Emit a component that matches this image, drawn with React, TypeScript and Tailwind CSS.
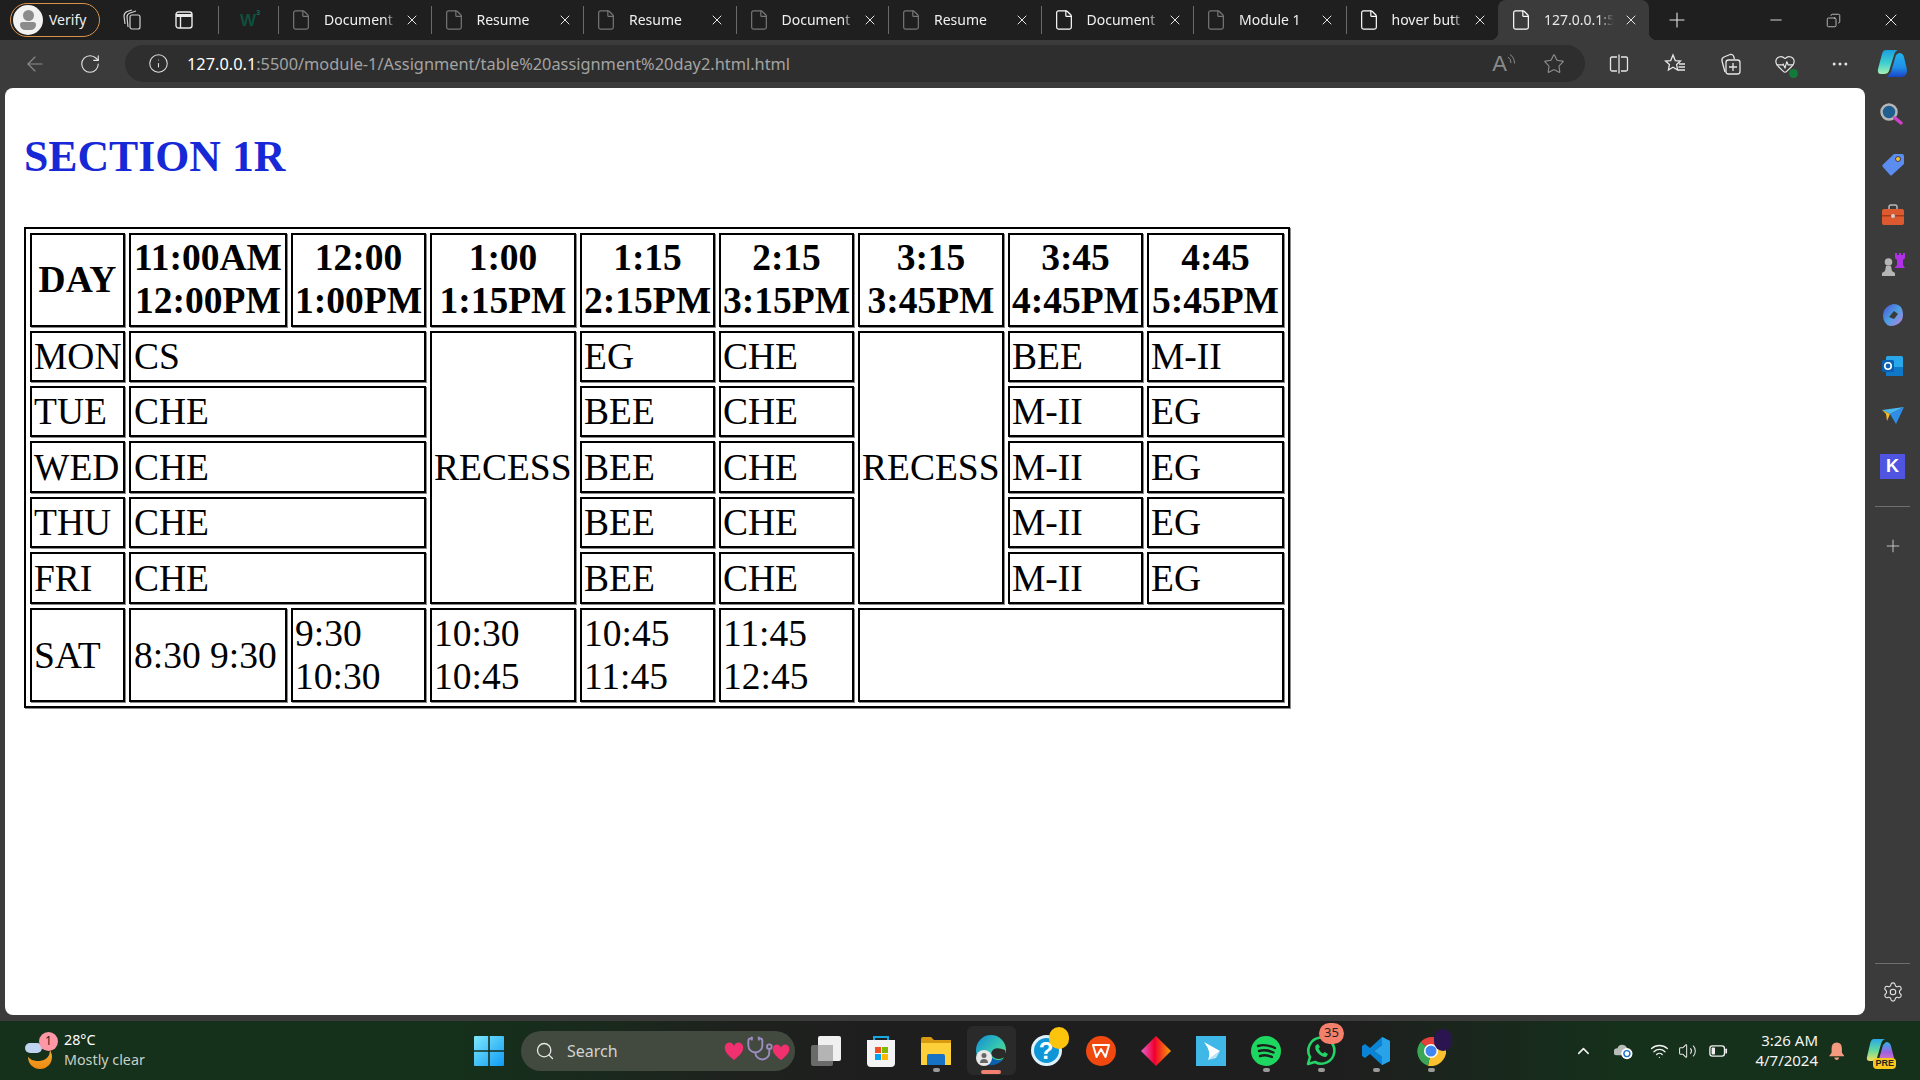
import React from 'react';
import {
	ArrowLeft,
	Copy,
	Ellipsis,
	File,
	HeartPulse,
	Info,
	Minus,
	Plus,
	RotateCw,
	Search,
	Settings,
	Star,
	Stethoscope,
	Volume2,
	Wifi,
	X,
	ChevronUp,
} from 'lucide-react';

const uiFont = "font-['Noto_Sans',sans-serif]";

const tabs = [
	{ title: 'Document', bright: false },
	{ title: 'Resume', bright: false },
	{ title: 'Resume', bright: false },
	{ title: 'Document', bright: false },
	{ title: 'Resume', bright: false },
	{ title: 'Document', bright: true },
	{ title: 'Module 1', bright: false },
	{ title: 'hover butt', bright: true },
];

const cell = 'border-2 border-black shadow-[1px_1px_0_#8a8a8a] px-[2px] py-[2px] align-middle';
const wide = 'border-2 border-black shadow-[1px_1px_0_#8a8a8a] pl-[3px] pr-[1px] py-[2px] align-middle';
const head = 'border-2 border-black shadow-[1px_1px_0_#8a8a8a] px-[2px] pt-[1px] pb-[3px] align-middle text-center font-bold';

const dayRows = [
	{ day: 'TUE', first: 'CHE', h: 'h-[51px]' },
	{ day: 'WED', first: 'CHE', h: 'h-[52px]' },
	{ day: 'THU', first: 'CHE', h: 'h-[51px]' },
	{ day: 'FRI', first: 'CHE', h: 'h-[52px]' },
];

const Tab = ({ title, bright }: { title: string; bright: boolean }) => (
	<div className="flex h-7 w-[152.5px] shrink-0 items-center border-l border-[#6a6a6a]">
		<File size={22} strokeWidth={1.3} className={`ml-[11px] ${bright ? 'text-white' : 'text-[#777777]'}`} />
		<div className="ml-[12px] w-[72px] overflow-hidden pb-[2px] whitespace-nowrap text-[14px] text-[#f0f0f0] [mask-image:linear-gradient(90deg,#000_85%,transparent)]">
			{title}
		</div>
		<X size={16} strokeWidth={1.5} className="ml-[8px] text-[#e6e6e6]" />
	</div>
);

// ブラウザのアクティブタブ
const ActiveTab = () => (
	<div className="relative flex h-10 w-[151px] shrink-0 items-center rounded-t-lg bg-[#3b3b3b]">
		<span className="absolute bottom-0 -left-2 h-2 w-2 bg-[radial-gradient(circle_at_0_0,#1f1f1f_8px,#3b3b3b_8.5px)]" />
		<span className="absolute -right-2 bottom-0 h-2 w-2 bg-[radial-gradient(circle_at_100%_0,#1f1f1f_8px,#3b3b3b_8.5px)]" />
		<File size={22} strokeWidth={1.3} className="ml-[12px] text-white" />
		<div className="ml-[12px] w-[70px] overflow-hidden pb-[2px] whitespace-nowrap text-[14px] text-[#e8e8e8] [mask-image:linear-gradient(90deg,#000_78%,transparent)]">
			127.0.0.1:5
		</div>
		<X size={16} strokeWidth={1.5} className="ml-[9px] text-[#e6e6e6]" />
	</div>
);

const TabStrip = () => (
	<div className={`flex h-10 shrink-0 items-center bg-[#1f1f1f] ${uiFont}`}>
		<div className="flex w-[278px] shrink-0 items-center">
			<div className="ml-[10px] flex h-[34px] w-[90px] items-center rounded-full border border-[#d9914e]">
				<div className="ml-[2px] flex h-[30px] w-[30px] flex-col items-center justify-center overflow-hidden rounded-full bg-[#f2f2f2]">
					<span className="h-[11px] w-[11px] rounded-full bg-[#8c8c8c]" />
					<span className="mt-[1px] h-[8px] w-[16px] rounded-t-sm rounded-b-lg bg-[#8c8c8c]" />
				</div>
				<span className="ml-[6px] pb-[2px] text-[14px] text-[#f0f0f0]">Verify</span>
			</div>
			<svg width="20" height="22" viewBox="0 0 20 22" fill="none" stroke="#d0d0d0" strokeWidth="1.2" className="ml-[22px]">
				<rect x="8" y="6" width="10" height="14" rx="2" />
				<path d="M6 18 L5 8 Q5 5 8 4 L14 2" />
				<path d="M3 15 L2 7 Q2 4 5 2.5 L10 1" />
			</svg>
			<svg width="18" height="18" viewBox="0 0 18 18" fill="none" stroke="#e8e8e8" strokeWidth="1.4" className="ml-[33px]">
				<rect x="1" y="1" width="16" height="16" rx="2.5" />
				<path d="M1 4.5 H17" strokeWidth="3" />
				<path d="M5.5 5 V17" />
			</svg>
			<span className="ml-[25px] h-7 w-px bg-[#6a6a6a]" />
			<span className="relative ml-[21px] font-['Liberation_Sans',sans-serif] text-[17px] leading-none font-bold text-[#0f4f3c]">
				W<span className="absolute -top-[3px] -right-[4px] text-[7px] text-[#0f6f50]">3</span>
			</span>
		</div>
		{tabs.map((tab, i) => (
			<Tab key={i} title={tab.title} bright={tab.bright} />
		))}
		<ActiveTab />
		<Plus size={24} strokeWidth={1.1} className="ml-[16px] text-[#e6e6e6]" />
		<Minus size={18} strokeWidth={1.2} className="ml-[78px] text-[#e6e6e6]" />
		<Copy size={15} strokeWidth={1.2} className="ml-[41px] -scale-x-100 text-[#e6e6e6]" />
		<X size={20} strokeWidth={1.2} className="ml-[40px] text-[#e6e6e6]" />
	</div>
);

const Toolbar = () => (
	<div className={`flex h-12 shrink-0 items-start bg-[#3b3b3b] pt-[5px] ${uiFont}`}>
		<div className="flex h-[37px] w-[125px] shrink-0 items-center">
			<ArrowLeft size={24} strokeWidth={1.1} className="ml-[23px] text-[#8d8d8d]" />
			<RotateCw size={22} strokeWidth={1.2} className="ml-[32px] text-[#e6e6e6]" />
		</div>
		<div className="flex h-[37px] w-[1460px] shrink-0 items-center rounded-full bg-[#2e2e2e]">
			<Info size={21} strokeWidth={1.2} className="ml-[23px] text-[#e0e0e0]" />
			<span className="ml-[18px] pt-[1px] text-[16.35px] whitespace-nowrap text-[#a3a3a3]">
				<span className="text-white">127.0.0.1</span>:5500/module-1/Assignment/table%20assignment%20day2.html.html
			</span>
			<span className="ml-auto flex items-center">
				<span className="font-['Liberation_Sans',sans-serif] text-[22px] leading-none text-[#8a8a8a]">A</span>
				<svg width="9" height="12" viewBox="0 0 9 12" fill="none" stroke="#8a8a8a" strokeWidth="1" className="-mt-[10px]">
					<path d="M1 4 Q4 6 4 10 M3 1.5 Q7.5 4.5 7.5 10.5" />
				</svg>
				<Star size={22} strokeWidth={1.2} className="mr-[20px] ml-[27px] text-[#8f8f8f]" />
			</span>
		</div>
		<div className="flex h-[37px] items-center">
			<svg width="20" height="20" viewBox="0 0 20 20" fill="none" stroke="#e6e6e6" strokeWidth="1.3" className="ml-[24px]">
				<path d="M8 3 H3 Q1.5 3 1.5 4.5 V15.5 Q1.5 17 3 17 H8" />
				<path d="M12 3 H17 Q18.5 3 18.5 4.5 V15.5 Q18.5 17 17 17 H12" />
				<path d="M10 0.5 V19.5" />
			</svg>
			<svg width="22" height="22" viewBox="0 0 22 22" fill="none" stroke="#e6e6e6" strokeWidth="1.3" className="ml-[35px]">
				<path d="M9 2 L11.3 7.6 L16.5 8 L12.6 11.6 L13.6 17 L9 14.2 L4.4 17 L5.4 11.6 L1.5 8 L6.7 7.6 Z" />
				<path d="M15 11 H21 M14.5 14 H21 M14 17 H21" />
			</svg>
			<svg width="22" height="24" viewBox="0 0 22 24" fill="none" stroke="#e6e6e6" strokeWidth="1.3" className="ml-[33px]">
				<path d="M6 20 L3 9 Q2.5 6 5 5 L11 2.5 Q13.5 2 14.5 4 L15.5 7" />
				<rect x="7" y="8" width="14" height="14" rx="2.5" />
				<path d="M14 11 V19 M10 15 H18" />
			</svg>
			<span className="relative ml-[33px] flex">
				<HeartPulse size={22} strokeWidth={1.3} className="text-[#e6e6e6]" />
				<span className="absolute -right-[2px] -bottom-[3px] h-[9px] w-[9px] rounded-full bg-[#127a3a]" />
			</span>
			<Ellipsis size={20} strokeWidth={1.6} className="ml-[34px] text-[#e6e6e6]" />
			<svg width="30" height="32" viewBox="0 0 30 32" className="ml-[27px]">
				<defs>
					<linearGradient id="cop1" x1="0" y1="0" x2="0" y2="1">
						<stop offset="0" stopColor="#1a9fe0" />
						<stop offset="0.55" stopColor="#3fd0d0" />
						<stop offset="1" stopColor="#a8eeb0" />
					</linearGradient>
					<linearGradient id="cop2" x1="0" y1="0" x2="0" y2="1">
						<stop offset="0" stopColor="#22b4ec" />
						<stop offset="0.6" stopColor="#1f8fe8" />
						<stop offset="1" stopColor="#1a45c8" />
					</linearGradient>
				</defs>
				<path d="M22 5 Q26 5 27 9 L30 22 Q30 29 24 29 H10 L14 24 L19 7 Z" fill="url(#cop2)" />
				<path d="M9 2 H21 Q18 3 17 7 L12 23 Q11 26 7 26 H4 Q0 26 1 21 L5 6 Q6 2 9 2Z" fill="url(#cop1)" />
			</svg>
		</div>
	</div>
);

const Timetable = () => (
	<table className="w-[1266px] table-fixed border-separate border-spacing-[4px] border-2 border-black font-['Liberation_Serif',serif] text-[37.5px] leading-[43px] text-black shadow-[1px_1px_0_#8a8a8a]">
		<colgroup>
			<col className="w-[95px]" />
			<col className="w-[158px]" />
			<col className="w-[135px]" />
			<col className="w-[146px]" />
			<col className="w-[135px]" />
			<col className="w-[135px]" />
			<col className="w-[146px]" />
			<col className="w-[135px]" />
			<col className="w-[137px]" />
		</colgroup>
		<tbody>
			<tr className="h-[94px]">
				<th className={head}>DAY</th>
				<th className={head}>11:00AM<br />12:00PM</th>
				<th className={head}>12:00<br />1:00PM</th>
				<th className={head}>1:00<br />1:15PM</th>
				<th className={head}>1:15<br />2:15PM</th>
				<th className={head}>2:15<br />3:15PM</th>
				<th className={head}>3:15<br />3:45PM</th>
				<th className={head}>3:45<br />4:45PM</th>
				<th className={head}>4:45<br />5:45PM</th>
			</tr>
			<tr className="h-[51px]">
				<td className={cell}>MON</td>
				<td className={wide} colSpan={2}>CS</td>
				<td className={`${cell} whitespace-nowrap`} rowSpan={5}>RECESS</td>
				<td className={cell}>EG</td>
				<td className={cell}>CHE</td>
				<td className={`${cell} whitespace-nowrap`} rowSpan={5}>RECESS</td>
				<td className={cell}>BEE</td>
				<td className={cell}>M-II</td>
			</tr>
			{dayRows.map((row) => (
				<tr key={row.day} className={row.h}>
					<td className={cell}>{row.day}</td>
					<td className={wide} colSpan={2}>{row.first}</td>
					<td className={cell}>BEE</td>
					<td className={cell}>CHE</td>
					<td className={cell}>M-II</td>
					<td className={cell}>EG</td>
				</tr>
			))}
			<tr className="h-[93px]">
				<td className={cell}>SAT</td>
				<td className={`${wide} whitespace-nowrap`}>8:30 9:30</td>
				<td className={cell}>9:30<br />10:30</td>
				<td className={cell}>10:30<br />10:45</td>
				<td className={cell}>10:45<br />11:45</td>
				<td className={cell}>11:45<br />12:45</td>
				<td className={cell} colSpan={3}></td>
			</tr>
		</tbody>
	</table>
);

const SideIcon = ({ children }: { children: React.ReactNode }) => (
	<div className="flex h-[50.3px] items-center justify-center">{children}</div>
);

const Sidebar = () => (
	<div className="flex w-[55px] shrink-0 flex-col items-center pt-px">
		<SideIcon>
			<svg width="24" height="24" viewBox="0 0 24 24" className="-ml-[3px]">
				<circle cx="10" cy="10" r="7.5" fill="#1f5f8f" stroke="#b5b5b5" strokeWidth="2.5" />
				<path d="M16 16 L22 21" stroke="#d040c8" strokeWidth="3.5" strokeLinecap="round" />
			</svg>
		</SideIcon>
		<SideIcon>
			<svg width="24" height="24" viewBox="0 0 24 24">
				<path d="M13 2 H21 Q23 2 23 4 V12 L11 23 Q10 24 9 23 L1.5 14.5 Q1 13.5 2 12.5 Z" fill="#5b8df0" />
				<circle cx="17" cy="7" r="2.5" fill="#f4c430" stroke="#3a3a60" />
			</svg>
		</SideIcon>
		<SideIcon>
			<svg width="24" height="22" viewBox="0 0 24 22">
				<path d="M8 6 V3 Q8 1 10 1 H14 Q16 1 16 3 V6" fill="none" stroke="#b9b9b9" strokeWidth="1.5" />
				<rect x="1" y="5" width="22" height="16" rx="2" fill="#dd5a30" />
				<rect x="1" y="11" width="22" height="1.5" fill="#a53a1a" />
				<circle cx="12" cy="12" r="2" fill="#d0d0d0" />
			</svg>
		</SideIcon>
		<SideIcon>
			<svg width="24" height="24" viewBox="0 0 24 24">
				<path d="M14 0 H16 V2 H18 V0 H20 V2 H22 V0 H24 V5 L22 7 V12 L24 15 H13.5 L16 12 V7 L14 5 Z" fill="#b030e8" />
				<circle cx="7.5" cy="9" r="3.8" fill="#b5b5b5" />
				<path d="M5 13 H10 L11 18 L14 20 V23 H1 V20 L4 18 Z" fill="#b5b5b5" />
			</svg>
		</SideIcon>
		<SideIcon>
			<svg width="22" height="24" viewBox="0 0 22 24">
				<defs>
					<linearGradient id="m365" x1="0" y1="0" x2="1" y2="1">
						<stop offset="0" stopColor="#4f4fd8" />
						<stop offset="0.5" stopColor="#4aa0e0" />
						<stop offset="1" stopColor="#c080e0" />
					</linearGradient>
				</defs>
				<path d="M11 1 Q18 1 20 6 Q22 12 20 17 Q16 23 8 23 Q1 21 1 12 Q1 4 11 1Z" fill="url(#m365)" />
				<path d="M12 8 L16 11 L12 16 L7 14 Z" fill="#3b3b3b" />
			</svg>
		</SideIcon>
		<SideIcon>
			<svg width="22" height="22" viewBox="0 0 22 22">
				<rect x="4" y="1" width="17" height="20" rx="1.5" fill="#28a8ea" />
				<path d="M4 12 H21 V21 H4 Z" fill="#0f78c8" />
				<rect x="0" y="5" width="12" height="12" rx="1.5" fill="#0a5fb0" />
				<circle cx="6" cy="11" r="3.2" fill="none" stroke="#ffffff" strokeWidth="1.6" />
			</svg>
		</SideIcon>
		<SideIcon>
			<svg width="24" height="20" viewBox="0 0 24 20">
				<path d="M1 4 L23 1 L9 8 Z" fill="#4ab8f0" />
				<path d="M23 1 L15 18 L9 8 Z" fill="#2f8fe8" />
				<path d="M1 4 L9 8 L6 15 L5 8 Z" fill="#f4b820" />
			</svg>
		</SideIcon>
		<SideIcon>
			<div className="flex h-[25px] w-[25px] items-center justify-center bg-[#4f55e0] font-['Liberation_Sans',sans-serif] text-[18px] font-bold text-white">
				K
			</div>
		</SideIcon>
		<div className="mt-[15px] h-px w-[35px] bg-[#6e6e6e]" />
		<Plus size={20} strokeWidth={1.1} className="mt-[29px] text-[#cfcfcf]" />
		<div className="mt-auto h-px w-[35px] bg-[#6e6e6e]" />
		<Settings size={22} strokeWidth={1.2} className="mt-[17px] mb-[18px] text-[#e6e6e6]" />
	</div>
);

const TaskCell = ({ children, dot, active }: { children: React.ReactNode; dot?: boolean; active?: boolean }) => (
	<div className="relative flex h-[49px] w-[55px] shrink-0 items-center justify-center">
		{active && <span className="absolute top-0 left-[3px] h-[49px] w-[49px] rounded-md bg-[#2a2a2a]" />}
		<div className="relative flex">{children}</div>
		{dot && <span className="absolute bottom-[3px] left-[24px] h-[4px] w-[7px] rounded-full bg-[#9a9a9a]" />}
		{active && <span className="absolute bottom-[1px] left-[17px] h-[4px] w-[20px] rounded-full bg-[#f08070]" />}
	</div>
);

const Taskbar = () => (
	<div className={`flex h-[59px] shrink-0 items-center bg-[linear-gradient(90deg,#15301b_0%,#15301b_24%,#1e221e_38%,#1e1e1e_45%,#1e1e1e_70%,#15301b_84%,#15301b_100%)] ${uiFont}`}>
		{/* 天気 */}
		<div className="flex w-[461.5px] shrink-0 items-center">
			<div className="relative ml-[25px] h-[40px] w-[30px]">
				<span className="absolute top-[14px] left-[3px] h-[24px] w-[24px] rounded-full bg-[linear-gradient(180deg,#f0b040,#f08a10)]" />
				<span className="absolute top-[9px] left-[1px] h-[21px] w-[24px] rounded-full bg-[#15301b]" />
				<span className="absolute top-[12px] left-0 h-[10px] w-[17px] rounded-full bg-[#c0d4f0]" />
				<span className="absolute top-[1px] left-[14px] flex h-[19px] w-[19px] items-center justify-center rounded-full bg-[#ff98a6] text-[12px] text-[#222222]">1</span>
			</div>
			<div className="ml-[9px] flex -translate-y-px flex-col text-[14.3px] leading-[20px]">
				<span className="text-white">28°C</span>
				<span className="text-[#c8d0c8]">Mostly clear</span>
			</div>
		</div>
		<TaskCell>
			<svg width="30" height="30" viewBox="0 0 30 30">
				<defs>
					<linearGradient id="win" x1="0" y1="0" x2="1" y2="1">
						<stop offset="0" stopColor="#7ee8fb" />
						<stop offset="1" stopColor="#0f9bf5" />
					</linearGradient>
				</defs>
				<path d="M0 1 Q0 0 1 0 H14.2 V14.2 H0 Z M15.8 0 H29 Q30 0 30 1 V14.2 H15.8 Z M0 15.8 H14.2 V30 H1 Q0 30 0 29 Z M15.8 15.8 H30 V29 Q30 30 29 30 H15.8 Z" fill="url(#win)" />
			</svg>
		</TaskCell>
		<div className="ml-[4.5px] flex h-[40px] w-[274px] shrink-0 items-center rounded-full bg-[#42493f]">
			<Search size={20} strokeWidth={1.6} className="ml-[14px] text-[#e8e8e8]" />
			<span className="ml-[12px] text-[16px] text-[#d0d4d0]">Search</span>
			<span className="mr-[5px] ml-auto flex items-center">
				<svg width="20" height="20" viewBox="0 0 20 20" className="mr-[2px]"><path d="M10 19 C2 13 0 9 1 5 C2 1 8 0 10 5 C12 0 18 1 19 5 C20 9 18 13 10 19Z" fill="#f0306f" /></svg>
				<Stethoscope size={28} strokeWidth={1.6} className="-mt-[3px] text-[#9c8cc0]" />
				<svg width="18" height="18" viewBox="0 0 20 20" className="mt-[2px] -ml-[2px]"><path d="M10 19 C2 13 0 9 1 5 C2 1 8 0 10 5 C12 0 18 1 19 5 C20 9 18 13 10 19Z" fill="#f0306f" /></svg>
			</span>
		</div>
		<div className="ml-[3.5px] flex">
			<TaskCell>
				<svg width="30" height="30" viewBox="0 0 30 30">
					<rect x="0" y="9" width="22" height="21" rx="2" fill="#6a6a6a" />
					<rect x="7" y="0" width="23" height="25" rx="2" fill="#f0f0f0" />
					<rect x="7" y="9" width="15" height="16" fill="#b4b4b4" />
				</svg>
			</TaskCell>
			<TaskCell>
				<svg width="30" height="34" viewBox="0 0 30 34">
					<path d="M8 8 V3 H22 V8" fill="none" stroke="#18a8e0" strokeWidth="2" />
					<path d="M1 6 H29 V29 Q29 33 25 33 H5 Q1 33 1 29 Z" fill="#f4f4f4" />
					<rect x="9" y="13" width="6" height="6" fill="#f25022" />
					<rect x="16" y="13" width="6" height="6" fill="#7fba00" />
					<rect x="9" y="20" width="6" height="6" fill="#00a4ef" />
					<rect x="16" y="20" width="6" height="6" fill="#ffb900" />
				</svg>
			</TaskCell>
			<TaskCell dot>
				<svg width="30" height="28" viewBox="0 0 30 28">
					<path d="M0 2 Q0 0 2 0 H10 L13 3 H30 V26 H0 Z" fill="#d79a10" />
					<path d="M0 6 H30 V28 H0 Z" fill="#fdd03a" />
					<path d="M6 19 Q6 17 8 17 H22 Q24 17 24 19 V28 H6 Z" fill="#1672c4" />
				</svg>
			</TaskCell>
			<TaskCell active>
				<svg width="30" height="32" viewBox="0 0 30 32">
					<defs>
						<linearGradient id="edge" x1="0" y1="0" x2="1" y2="1">
							<stop offset="0" stopColor="#0f8ad8" />
							<stop offset="0.55" stopColor="#38c8b0" />
							<stop offset="1" stopColor="#62de62" />
						</linearGradient>
					</defs>
					<circle cx="15" cy="15" r="15" fill="url(#edge)" />
					<path d="M12 30 Q24 30 29 22 Q22 26 17 22 Q13 18 18 14 Q22 12 29 15 L30 19 V29 H12 Z" fill="#2a2a2a" />
					<path d="M12 30 Q22 31 27 24 Q20 27 15 22 L10 26 Z" fill="#0a5fb0" />
					<circle cx="8" cy="23" r="8" fill="#e8e8e8" />
					<circle cx="8" cy="20.5" r="2.5" fill="#666666" />
					<path d="M4 28 Q4 24 8 24 Q12 24 12 28 Z" fill="#666666" />
				</svg>
			</TaskCell>
			<TaskCell>
				<div className="flex h-[31px] w-[31px] items-center justify-center rounded-full border-[3px] border-[#dff2fa] bg-[#0f96d8] font-['Liberation_Sans',sans-serif] text-[24px] font-bold text-white">?</div>
				<span className="absolute -top-[8px] -right-[7px] h-[22px] w-[20px] rounded-full bg-[#fdc40e]" />
			</TaskCell>
			<TaskCell>
				<svg width="30" height="30" viewBox="0 0 30 30">
					<circle cx="15" cy="15" r="15" fill="#f0480f" />
					<path d="M7 9 H23 L19.5 21 L15 13 L10.5 21 Z" fill="none" stroke="#ffffff" strokeWidth="2" strokeLinejoin="round" />
				</svg>
			</TaskCell>
			<TaskCell>
				<svg width="30" height="30" viewBox="0 0 30 30">
					<defs>
						<linearGradient id="dia" x1="0" y1="0" x2="1" y2="0">
							<stop offset="0" stopColor="#e860d0" />
							<stop offset="0.45" stopColor="#f00030" />
							<stop offset="1" stopColor="#f8a000" />
						</linearGradient>
					</defs>
					<path d="M15 0 L30 15 L15 30 L0 15 Z" fill="url(#dia)" />
				</svg>
			</TaskCell>
			<TaskCell>
				<svg width="30" height="30" viewBox="0 0 30 30">
					<rect width="30" height="30" fill="#3fb8e8" />
					<path d="M8 6 L24 15 L12 24 Q16 16 8 6 Z" fill="#ffffff" />
					<path d="M12 24 L24 15 L20 22 Z" fill="#bfe6f7" />
				</svg>
			</TaskCell>
			<TaskCell dot>
				<svg width="30" height="30" viewBox="0 0 30 30">
					<circle cx="15" cy="15" r="15" fill="#1ed760" />
					<path d="M7 10 Q15 7.5 24 12 M8 15 Q15 13 22.5 16.5 M9 20 Q15 18 21 21" fill="none" stroke="#1e1e1e" strokeWidth="2.4" strokeLinecap="round" />
				</svg>
			</TaskCell>
			<TaskCell dot>
				<svg width="30" height="30" viewBox="0 0 30 30" fill="none">
					<path d="M2 28 L4 21 A13 13 0 1 1 9 26 Z" stroke="#25d366" strokeWidth="2.6" strokeLinejoin="round" />
					<path d="M10 9 Q8 12 11 16 Q15 21 20 21 L22 18 L18.5 16 L17 17.5 Q14 16 12.5 12.5 L14 11 L12 8 Z" fill="#25d366" />
				</svg>
				<span className="absolute -top-[13px] -right-[8px] flex h-[21px] w-[25px] items-center justify-center rounded-full bg-[#f47f6a] text-[13px] text-[#222222]">35</span>
			</TaskCell>
			<TaskCell dot>
				<svg width="30" height="30" viewBox="0 0 30 30">
					<path d="M21 1 L29 5 V25 L21 29 L9 18 L4 22 L1 20 V10 L4 8 L9 12 Z M21 9 L13 15 L21 21 Z" fill="#0a84d6" fillRule="evenodd" />
					<path d="M21 1 L29 5 V25 L21 29 Z M21 9 V21 L13 15 Z" fill="#28a3ea" fillRule="evenodd" />
				</svg>
			</TaskCell>
			<TaskCell dot>
				<svg width="30" height="30" viewBox="0 0 30 30">
					<path d="M15 15 L4.6 6 A15 15 0 0 1 28 7.5 Z" fill="#e5403a" />
					<path d="M15 15 L28 7.5 A15 15 0 0 1 12 29.7 Z" fill="#fbc02d" />
					<path d="M15 15 L12 29.7 A15 15 0 0 1 4.6 6 Z" fill="#3aa757" />
					<circle cx="15" cy="15" r="7" fill="#ffffff" />
					<circle cx="15" cy="15" r="5.5" fill="#3f86f0" />
				</svg>
				<span className="absolute -top-[7px] -right-[6px] h-[22px] w-[18px] rounded-full bg-[#2b1550]" />
			</TaskCell>
		</div>
		{/* トレイ */}
		<ChevronUp size={22} strokeWidth={2} className="ml-[115px] text-[#f0f0f0]" />
		<svg width="22" height="20" viewBox="0 0 22 20" className="ml-[22px]">
			<path d="M3 15 A4 4 0 0 1 4 7 A6 6 0 0 1 15 6 L16 15 Z" fill="#b8bcb8" />
			<circle cx="15" cy="13" r="6.5" fill="#ffffff" />
			<circle cx="15" cy="13" r="3.5" fill="none" stroke="#1a6fd0" strokeWidth="1.6" />
		</svg>
		<Wifi size={22} strokeWidth={1.7} className="ml-[17px] text-[#f0f0f0]" />
		<Volume2 size={22} strokeWidth={1.3} className="ml-[9px] text-[#e8e8e8]" />
		<svg width="22" height="14" viewBox="0 0 22 14" fill="none" className="ml-[12px]">
			<rect x="1" y="1" width="17" height="12" rx="3" stroke="#f0f0f0" strokeWidth="1.5" />
			<rect x="3" y="3" width="4" height="8" rx="1" fill="#f0f0f0" />
			<path d="M20 5 V9" stroke="#f0f0f0" strokeWidth="2" strokeLinecap="round" />
		</svg>
		<div className="ml-auto flex w-[90px] shrink-0 -translate-y-px flex-col items-end text-[15px] leading-[20px] text-[#f4f4f4]">
			<span>3:26 AM</span>
			<span>4/7/2024</span>
		</div>
		<svg width="18" height="22" viewBox="0 0 18 22" className="ml-[10.5px]">
			<path d="M9 1 Q15 1 15 8 V13 L18 17 H0 L3 13 V8 Q3 1 9 1Z" fill="#f49a80" />
			<path d="M6 18.5 H12 Q11 21.5 9 21.5 Q7 21.5 6 18.5Z" fill="#f49a80" />
		</svg>
		<div className="relative mr-[26px] ml-[22px] flex">
			<svg width="28" height="24" viewBox="0 0 28 24">
				<defs>
					<linearGradient id="pre1" x1="0" y1="0" x2="0" y2="1">
						<stop offset="0" stopColor="#2aa8e8" />
						<stop offset="0.5" stopColor="#60d8a0" />
						<stop offset="1" stopColor="#f0e060" />
					</linearGradient>
					<linearGradient id="pre2" x1="0" y1="0" x2="0" y2="1">
						<stop offset="0" stopColor="#30b0e8" />
						<stop offset="0.5" stopColor="#a060e0" />
						<stop offset="1" stopColor="#f080b0" />
					</linearGradient>
				</defs>
				<path d="M20 3 Q24 3 25 7 L28 19 Q28 24 23 24 H9 L13 20 L17 6 Z" fill="url(#pre2)" />
				<path d="M8 0 H19 Q16 1 15 5 L11 19 Q10 22 6 22 H4 Q0 22 1 18 L4 5 Q5 0 8 0Z" fill="url(#pre1)" />
			</svg>
			<span className="absolute right-[-2px] bottom-[-6px] rounded-sm bg-[#f8c81c] px-[2px] font-['Liberation_Sans',sans-serif] text-[9px] leading-[11px] font-bold text-[#222222]">PRE</span>
		</div>
	</div>
);

export default function App() {
	return (
		<div className="flex h-[1080px] w-[1920px] flex-col overflow-hidden bg-[#3b3b3b]">
			<TabStrip />
			<Toolbar />
			<div className="flex min-h-0 flex-1">
				<main className="mb-[6px] ml-[5px] w-[1860px] shrink-0 rounded-lg bg-white pl-[19px]">
					<h1 className="pt-[45px] pb-[48px] font-['Liberation_Serif',serif] text-[43.75px] leading-[46px] font-bold text-[#1728d6]">
						SECTION 1R
					</h1>
					<Timetable />
				</main>
				<Sidebar />
			</div>
			<Taskbar />
		</div>
	);
}
